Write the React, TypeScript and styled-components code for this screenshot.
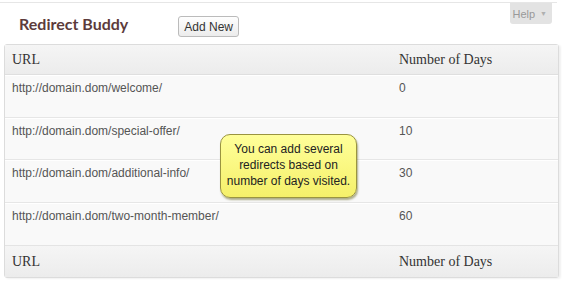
import React from "react";
import styled, { createGlobalStyle } from "styled-components";

const Global = createGlobalStyle`
  html, body { margin: 0; padding: 0; background: #ffffff; }
  body { font-family: "Liberation Sans", Arial, sans-serif; }
`;

const Page = styled.div`
  width: 567px;
  height: 283px;
  padding-top: 2px;
  box-sizing: border-box;
  overflow: hidden;
`;

const HeaderRow = styled.div`
  display: flex;
  align-items: flex-start;
  width: 557px;
  height: 42px;
  border-top: 1px solid #e6e6e6;
  padding-left: 19px;
  box-sizing: border-box;
`;

const Title = styled.h2`
  margin: 10px 0 0 0;
  font-family: Lato, "Open Sans", sans-serif;
  font-weight: 700;
  font-size: 16px;
  line-height: 22px;
  color: #5c3b3b;
`;

const AddButton = styled.button`
  margin: 13px 0 0 50px;
  height: 21px;
  padding: 0 5px;
  font-family: "Liberation Sans", Arial, sans-serif;
  font-size: 12px;
  color: #333;
  background: linear-gradient(#fefefe, #ececec);
  border: 1px solid #bbbbbb;
  border-radius: 3px;
  box-sizing: border-box;
`;

const HelpTab = styled.div`
  margin-left: auto;
  margin-right: 5px;
  height: 21px;
  padding: 0 5px 0 2px;
  display: flex;
  align-items: center;
  gap: 5px;
  background: #e3e3e3;
  border-radius: 0 0 3px 3px;
  font-family: "Liberation Sans", Arial, sans-serif;
  font-size: 11px;
  color: #999999;
`;

const Caret = styled.span`
  font-size: 7px;
  color: #b0b0b0;
`;

const TableWrap = styled.div`
  position: relative;
  margin-left: 4px;
  width: 555px;
`;

const Table = styled.table`
  width: 555px;
  border-collapse: separate;
  border-spacing: 0;
  border: 1px solid #dcdcdc;
  border-radius: 3px;
  background: #f9f9f9;
  box-shadow: 2px 1px 2px rgba(0, 0, 0, 0.06);
  table-layout: fixed;
`;

const HeadCell = styled.th<{ $h: number; $w?: number }>`
  height: ${(p) => p.$h}px;
  width: ${(p) => (p.$w ? `${p.$w}px` : "auto")};
  padding: 0 7px;
  box-sizing: border-box;
  text-align: left;
  font-family: "Liberation Serif", "Times New Roman", serif;
  font-weight: 400;
  font-size: 14px;
  color: #333;
  background: linear-gradient(#f5f5f5, #ececec);
`;

const HeadTop = styled(HeadCell)`
  border-bottom: 1px solid #dfdfdf;
`;

const FootCell = styled(HeadCell)`
  border-top: 1px solid #e4e4e4;
`;

const Cell = styled.td<{ $last?: boolean }>`
  height: 42.5px;
  padding: 5px 7px 0 7px;
  box-sizing: border-box;
  vertical-align: top;
  font-family: "Liberation Sans", Arial, sans-serif;
  font-size: 12px;
  line-height: 14px;
  color: #555;
  border-bottom: ${(p) => (p.$last ? "none" : "1px solid #e6e6e6")};
  border-top: 1px solid #ffffff;
`;

const Tooltip = styled.div`
  position: absolute;
  left: 216px;
  top: 90px;
  width: 137px;
  height: 64px;
  box-sizing: border-box;
  display: flex;
  align-items: center;
  justify-content: center;
  text-align: center;
  padding: 0 4px 3px 4px;
  background: linear-gradient(#ffff9a, #f5f06a);
  border: 1px solid #9a9440;
  border-radius: 10px;
  box-shadow: 1px 2px 2px rgba(80, 80, 0, 0.45);
  font-family: "Liberation Sans", Arial, sans-serif;
  font-size: 12px;
  line-height: 16px;
  color: #222;
`;

const rows = [
  { url: "http://domain.dom/welcome/", days: "0" },
  { url: "http://domain.dom/special-offer/", days: "10" },
  { url: "http://domain.dom/additional-info/", days: "30" },
  { url: "http://domain.dom/two-month-member/", days: "60" },
];

export default function App() {
  return (
    <Page>
      <Global />
      <HeaderRow>
        <Title>Redirect Buddy</Title>
        <AddButton>Add New</AddButton>
        <HelpTab>
          Help <Caret>▼</Caret>
        </HelpTab>
      </HeaderRow>
      <TableWrap>
        <Table>
          <thead>
            <tr>
              <HeadTop $h={30} $w={387}>URL</HeadTop>
              <HeadTop $h={30}>Number of Days</HeadTop>
            </tr>
          </thead>
          <tbody>
            {rows.map((r, i) => (
              <tr key={r.url}>
                <Cell $last={i === rows.length - 1}>{r.url}</Cell>
                <Cell $last={i === rows.length - 1}>{r.days}</Cell>
              </tr>
            ))}
          </tbody>
          <tfoot>
            <tr>
              <FootCell $h={32}>URL</FootCell>
              <FootCell $h={32}>Number of Days</FootCell>
            </tr>
          </tfoot>
        </Table>
        <Tooltip>
          You can add several redirects based on number of days visited.
        </Tooltip>
      </TableWrap>
    </Page>
  );
}
